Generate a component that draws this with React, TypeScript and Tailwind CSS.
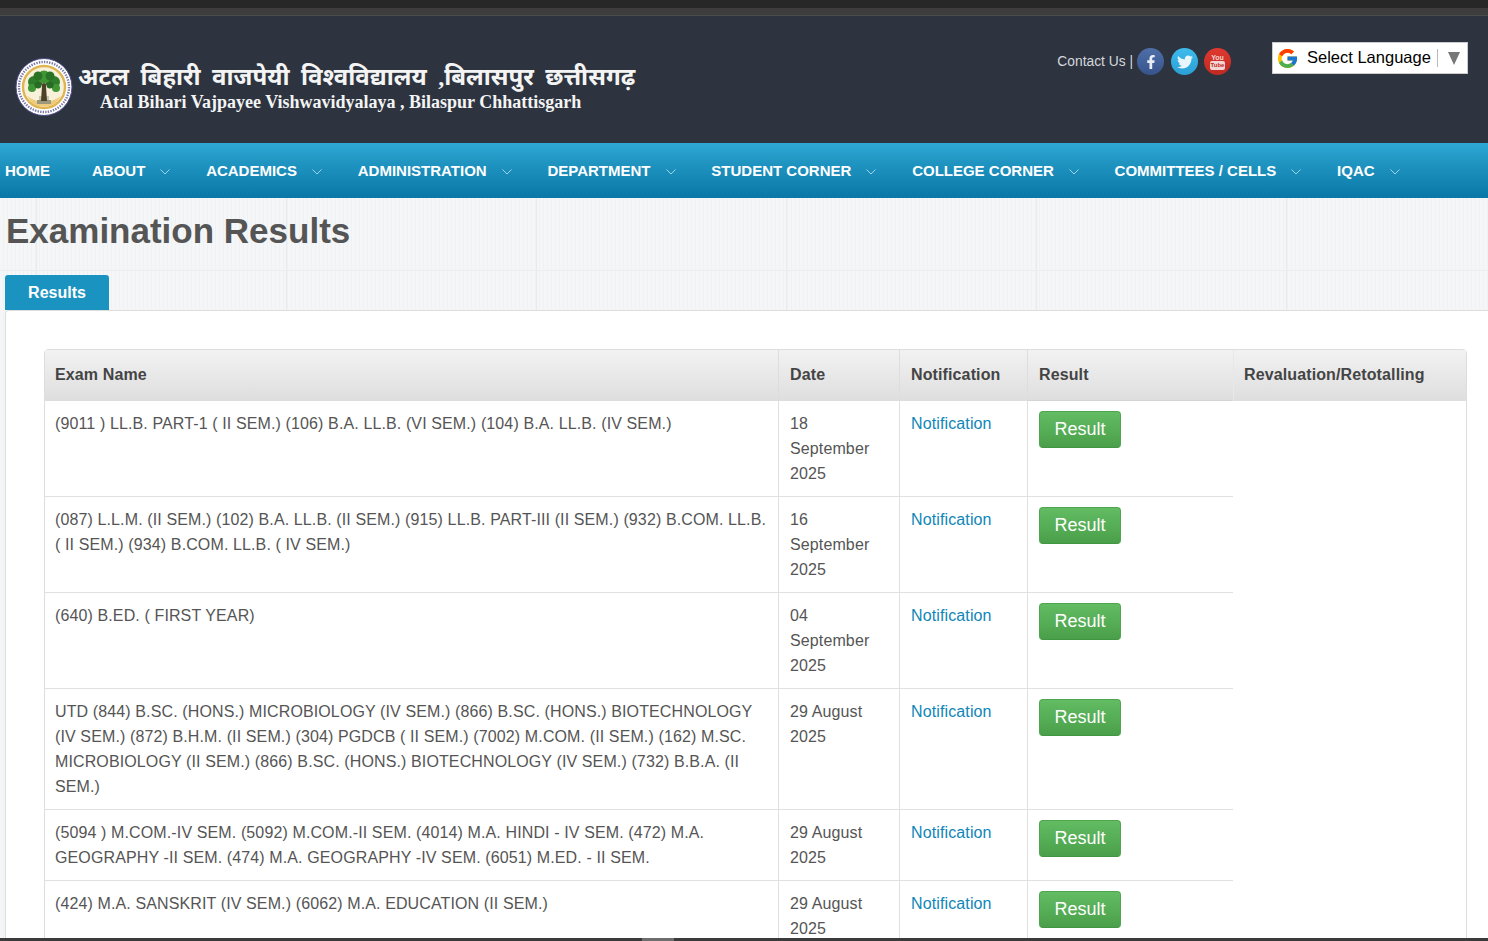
import { FcGoogle } from 'react-icons/fc';
import { FaFacebookF, FaTwitter } from 'react-icons/fa';

const navItems = [
  { label: 'HOME', chevron: false },
  { label: 'ABOUT', chevron: true },
  { label: 'ACADEMICS', chevron: true },
  { label: 'ADMINISTRATION', chevron: true },
  { label: 'DEPARTMENT', chevron: true },
  { label: 'STUDENT CORNER', chevron: true },
  { label: 'COLLEGE CORNER', chevron: true },
  { label: 'COMMITTEES / CELLS', chevron: true },
  { label: 'IQAC', chevron: true },
];

const results = [
  {
    name: '(9011 ) LL.B. PART-1 ( II SEM.) (106) B.A. LL.B. (VI SEM.) (104) B.A. LL.B. (IV SEM.)',
    date: '18 September 2025',
  },
  {
    name: '(087) L.L.M. (II SEM.) (102) B.A. LL.B. (II SEM.) (915) LL.B. PART-III (II SEM.) (932) B.COM. LL.B. ( II SEM.) (934) B.COM. LL.B. ( IV SEM.)',
    date: '16 September 2025',
  },
  { name: '(640) B.ED. ( FIRST YEAR)', date: '04 September 2025' },
  {
    name: 'UTD (844) B.SC. (HONS.) MICROBIOLOGY (IV SEM.) (866) B.SC. (HONS.) BIOTECHNOLOGY (IV SEM.) (872) B.H.M. (II SEM.) (304) PGDCB ( II SEM.) (7002) M.COM. (II SEM.) (162) M.SC. MICROBIOLOGY (II SEM.) (866) B.SC. (HONS.) BIOTECHNOLOGY (IV SEM.) (732) B.B.A. (II SEM.)',
    date: '29 August 2025',
  },
  {
    name: '(5094 ) M.COM.-IV SEM. (5092) M.COM.-II SEM. (4014) M.A. HINDI - IV SEM. (472) M.A. GEOGRAPHY -II SEM. (474) M.A. GEOGRAPHY -IV SEM. (6051) M.ED. - II SEM.',
    date: '29 August 2025',
  },
  { name: '(424) M.A. SANSKRIT (IV SEM.) (6062) M.A. EDUCATION (II SEM.)', date: '29 August 2025' },
];

function Logo() {
  return (
    <svg width="58" height="58" viewBox="0 0 58 58" className="shrink-0">
      <ellipse cx="29" cy="29" rx="28" ry="28.5" fill="#ffffff" stroke="#4b4a86" strokeWidth="1" />
      <circle cx="29" cy="29" r="25" fill="none" stroke="#7a78a8" strokeWidth="2.4" strokeDasharray="1.4 1.2" />
      <circle cx="29" cy="29" r="21" fill="#f7f1da" stroke="#dfb552" strokeWidth="2.4" />
      <path d="M12 38 Q29 50 46 38 L40 46 Q29 51 18 46 Z" fill="#eecb7a" />
      <rect x="22" y="42" width="14" height="4" fill="#9b977c" />
      <rect x="24" y="38" width="10" height="4" fill="#c9c6ad" />
      <path d="M26 43 L27 28 L24 22 L28 26 L29 20 L30 26 L34 22 L31 28 L32 43 Z" fill="#4f4128" />
      <circle cx="19" cy="24" r="6" fill="#2f7d2a" />
      <circle cx="39" cy="24" r="6" fill="#2f7d2a" />
      <circle cx="29" cy="19" r="6.5" fill="#3f9635" />
      <circle cx="23" cy="18" r="4.5" fill="#2a7326" />
      <circle cx="35" cy="18" r="4.5" fill="#2a7326" />
      <circle cx="17" cy="30" r="4" fill="#3f9635" />
      <circle cx="41" cy="30" r="4" fill="#3f9635" />
      <circle cx="23" cy="27" r="3.5" fill="#256d24" />
      <circle cx="35" cy="27" r="3.5" fill="#256d24" />
    </svg>
  );
}

function SocialLinks() {
  return (
    <div className="flex items-center">
      <span className="text-[13.8px] text-[#d5d8dc] mr-[4px] pt-[2px]">Contact Us |</span>
      <span className="w-[27px] h-[27px] rounded-full bg-[linear-gradient(#4f6fa8,#37538c)] flex items-center justify-center text-[#e8edf5]">
        <FaFacebookF size={14} />
      </span>
      <span className="w-[27px] h-[27px] rounded-full bg-[linear-gradient(#3dbcec,#2a9fd6)] flex items-center justify-center text-[#e8f6fc] ml-[7px]">
        <FaTwitter size={16} />
      </span>
      <span className="w-[27px] h-[27px] rounded-full bg-[linear-gradient(#e0392f,#bf2a22)] flex flex-col items-center justify-center text-[#f3d6d3] ml-[6px]">
        <span className="text-[7px] leading-[7px] font-bold">You</span>
        <span className="w-[15px] h-[9px] rounded-[2px] bg-[#f3d6d3] text-[#bf2a22] text-[6px] leading-[9px] font-bold text-center">Tube</span>
      </span>
    </div>
  );
}

function LanguageSelect() {
  return (
    <div className="w-[196px] h-[32px] bg-white border border-[#cccccc] flex items-center ml-[41px]">
      <FcGoogle size={23} className="ml-[3px] shrink-0" />
      <span className="text-[16.5px] text-black ml-[8px] pb-[2px] whitespace-nowrap">Select Language</span>
      <span className="w-px h-[18px] bg-[#bbbbbb] ml-[6px]" />
      <span className="ml-[10px] w-0 h-0 border-l-[6px] border-r-[6px] border-t-[13px] border-l-transparent border-r-transparent border-t-[#777777]" />
    </div>
  );
}

function Chevron() {
  return (
    <svg width="10" height="6" viewBox="0 0 10 6" fill="none" className="ml-[15px] mt-[2px]">
      <path d="M0.5 0.5 L5 5 L9.5 0.5" stroke="#9fd3e8" strokeWidth="1" />
    </svg>
  );
}

export default function App() {
  return (
    <div
      className="h-[941px] overflow-hidden relative bg-[#f4f6f7] text-[16px] text-[#555555]"
      style={{ fontFamily: '"Liberation Sans", Arial, sans-serif' }}
    >
      <div className="h-[8px] bg-[#272727]" />
      <div className="h-[8px] bg-[#3d3d3d] border-b border-[#4a4d4d]" />

      <header className="h-[127px] bg-[#2d3440] flex justify-between pr-[20px]">
        <div className="flex items-center pl-[15px] pt-[14px]">
          <Logo />
          <div className="ml-[5px] text-[#f4f4f4]" style={{ fontFamily: '"Liberation Serif", "Noto Sans", serif' }}>
            <div className="text-[24px] leading-[30px] font-bold whitespace-nowrap [word-spacing:5.4px]">अटल बिहारी वाजपेयी विश्वविद्यालय ,बिलासपुर छत्तीसगढ़</div>
            <div className="text-[18px] leading-[20px] font-bold pl-[22px] whitespace-nowrap">Atal Bihari Vajpayee Vishwavidyalaya , Bilaspur Chhattisgarh</div>
          </div>
        </div>
        <div className="flex items-start pt-[26px]">
          <div className="pt-[6px]">
            <SocialLinks />
          </div>
          <LanguageSelect />
        </div>
      </header>

      <nav className="h-[55px] bg-[linear-gradient(#2ea8d4,#2095c2_35%,#0a78a6)] flex items-center pl-[5px] pt-[1px]">
        {navItems.map((item) => (
          <a
            key={item.label}
            className={`flex items-center text-[15px] font-bold text-white whitespace-nowrap ${item.chevron ? 'mr-[35.8px]' : 'mr-[42px]'}`}
          >
            {item.label}
            {item.chevron && <Chevron />}
          </a>
        ))}
      </nav>

      <main className="bg-[repeating-linear-gradient(90deg,transparent_0px,transparent_3px,#eff2f3_3px,#eff2f3_4px),linear-gradient(90deg,transparent_36px,#e6ecee_36px,#e6ecee_37px,transparent_37px),linear-gradient(#f4f6f7_72px,#e8eeed_72px,#e8eeed_73px,#f4f6f7_73px)] bg-[size:auto,250px_100%,100%_100%]">
        <h1 className="text-[35px] leading-[40px] font-bold text-[#555555] pl-[6px] pt-[13px]">Examination Results</h1>
        <div className="pl-[5px] mt-[24px]">
          <div className="w-[104px] h-[35px] bg-[#1b93c0] rounded-t-[3px] text-white font-bold text-center leading-[35px]">Results</div>
          <div className="bg-white border-t border-l border-[#dddddd] rounded-tl-[4px] pl-[38px] pr-[21px] pt-[38px] h-[700px]">
            <table className="table-fixed w-[1423px] border-separate border-spacing-0 border border-[#dddddd] rounded-t-[4px] tracking-[0.12px]">
              <colgroup>
                <col className="w-[734px]" />
                <col className="w-[121px]" />
                <col className="w-[128px]" />
                <col className="w-[205px]" />
                <col className="w-[233px]" />
              </colgroup>
              <thead>
                <tr className="bg-[linear-gradient(#f2f2f2,#dedede)] text-left text-[#444444]">
                  <th className="h-[51px] px-[10px] border-r border-b border-[#dddddd]">Exam Name</th>
                  <th className="px-[11px] border-r border-b border-[#dddddd]">Date</th>
                  <th className="px-[11px] border-r border-b border-[#dddddd]">Notification</th>
                  <th className="px-[11px] border-b border-[#d4d4d4]">Result</th>
                  <th className="pl-[10px] pr-[11px] pb-[1px] whitespace-nowrap border-l border-[#e8e8e8]">Revaluation/Retotalling</th>
                </tr>
              </thead>
              <tbody>
                {results.map((row) => (
                  <tr key={row.name} className="align-top leading-[25px]">
                    <td className="p-[10px] border-r border-b border-[#e0e0e0]">{row.name}</td>
                    <td className="py-[10px] px-[11px] border-r border-b border-[#e0e0e0]">{row.date}</td>
                    <td className="py-[10px] px-[11px] border-r border-b border-[#e0e0e0]">
                      <a className="text-[#0e86b8]">Notification</a>
                    </td>
                    <td className="py-[10px] px-[11px] border-b border-[#e0e0e0]">
                      <button className="block w-[82px] h-[37px] rounded-[4px] border border-[#4fa54f] border-b-[#419641] bg-[linear-gradient(#62bc62,#4aa04a)] text-[18px] text-white tracking-normal">
                        Result
                      </button>
                    </td>
                    <td />
                  </tr>
                ))}
              </tbody>
            </table>
          </div>
        </div>
      </main>

      <div className="absolute left-0 right-0 bottom-0 h-[3px] bg-[#3a3a3a]">
        <div className="ml-[642px] w-[32px] h-full bg-[#6d6d6d]" />
      </div>
    </div>
  );
}
